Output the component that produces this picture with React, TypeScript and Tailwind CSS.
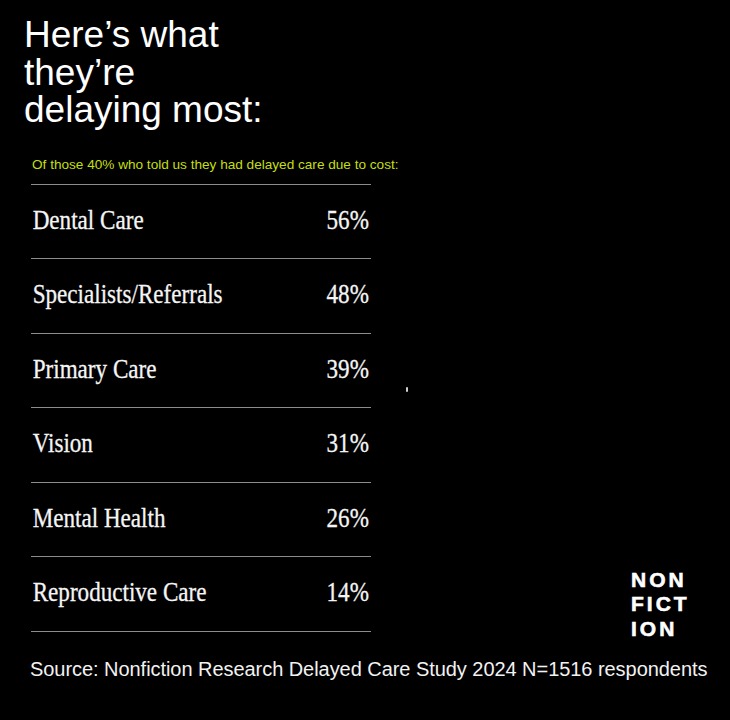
import React from "react";

const rows = [
  { label: "Dental Care", pct: "56%" },
  { label: "Specialists/Referrals", pct: "48%" },
  { label: "Primary Care", pct: "39%" },
  { label: "Vision", pct: "31%" },
  { label: "Mental Health", pct: "26%" },
  { label: "Reproductive Care", pct: "14%" },
];

export default function App() {
  return (
    <div
      className="relative w-[730px] h-[720px] bg-black text-white overflow-hidden"
      style={{ fontFamily: '"Liberation Sans", Arial, sans-serif' }}
    >
      <h1 className="pt-[16px] pl-[24px] text-[37px] leading-[37.5px] font-normal text-white">
        Here’s what
        <br />
        they’re
        <br />
        delaying most:
      </h1>
      <p className="mt-[28px] pl-[32px] text-[13.6px] leading-[16px] text-[#c4df0f]">
        Of those 40% who told us they had delayed care due to cost:
      </p>
      <div className="mt-[11px] flex items-start">
        <div className="ml-[31px] w-[340px] border-t border-[#8c8c8c]">
          {rows.map((r) => (
            <div
              key={r.label}
              className="h-[74.5px] border-b border-[#8c8c8c] flex items-center justify-between pb-[4px] font-['Liberation_Serif','Times_New_Roman',serif] text-[27.5px] text-[#f5f5f5]"
            >
              <span className="inline-block pl-[2px] origin-left scale-x-[0.84] whitespace-nowrap [-webkit-text-stroke:0.3px_#f5f5f5]">
                {r.label}
              </span>
              <span className="inline-block pr-[3px] origin-right scale-x-[0.84] [-webkit-text-stroke:0.3px_#f5f5f5]">
                {r.pct}
              </span>
            </div>
          ))}
        </div>
        <div className="ml-[260px] mt-[384px] -mb-[12px] text-[21px] leading-[24.5px] font-bold tracking-[3px] text-white [-webkit-text-stroke:0.6px_#ffffff]">
          NON
          <br />
          FICT
          <br />
          ION
        </div>
      </div>
      <p className="mt-[25px] pl-[30px] text-[20px] leading-[24px] text-[#f2f2f2] whitespace-nowrap tracking-[-0.05px]">
        Source: Nonfiction Research Delayed Care Study 2024 N=1516 respondents
      </p>
      <span className="absolute left-[406px] top-[387px] w-[2px] h-[5px] rounded-full bg-[#cfcfcf]" />
    </div>
  );
}
